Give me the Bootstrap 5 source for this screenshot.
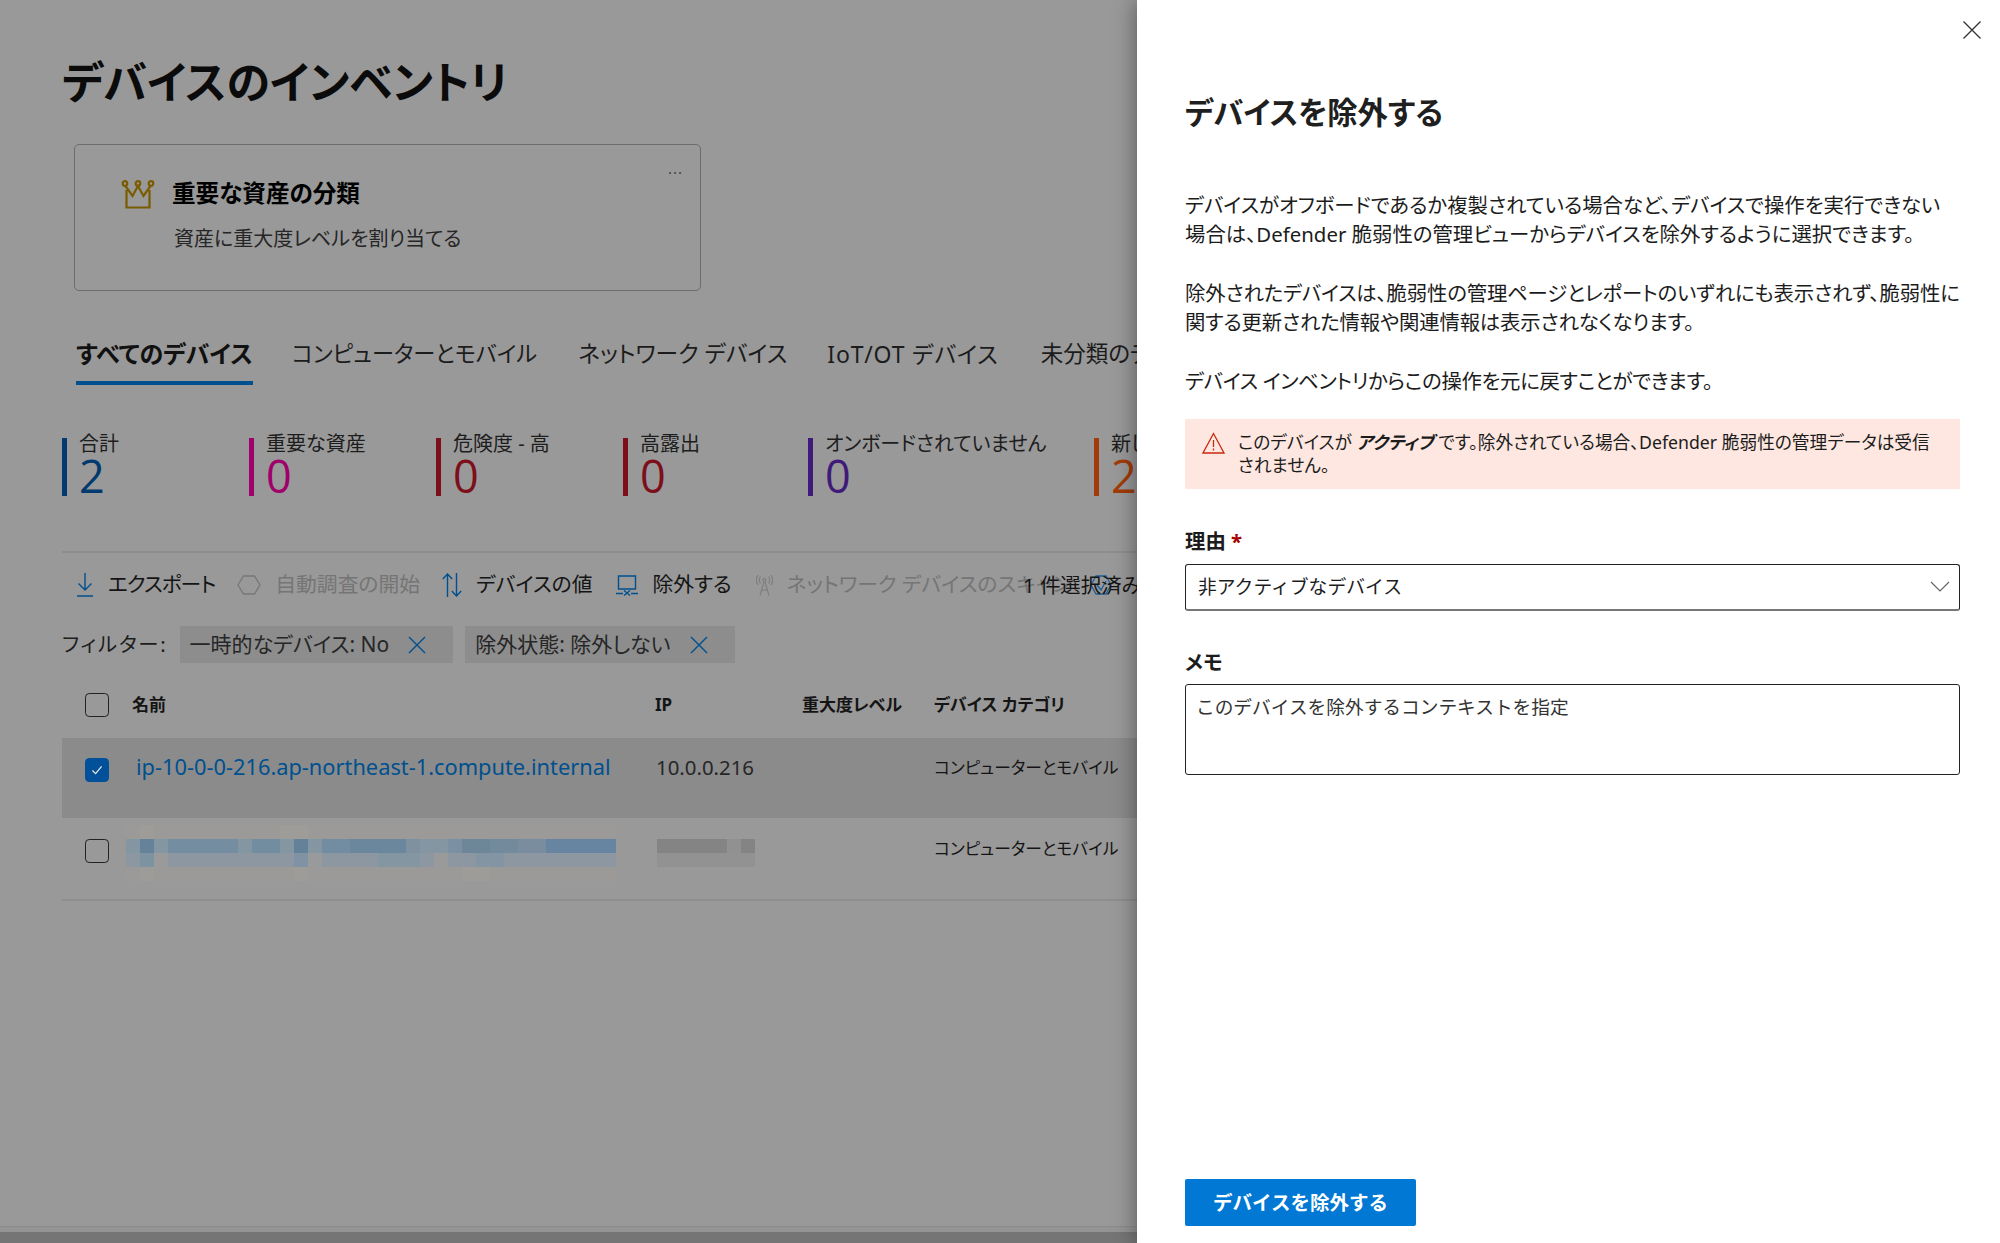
<!DOCTYPE html>
<html lang="ja">
<head>
<meta charset="utf-8">
<title>デバイスのインベントリ</title>
<link href="https://cdn.jsdelivr.net/npm/bootstrap@5.3.0/dist/css/bootstrap.min.css" rel="stylesheet">
<style>
html,body{height:1243px;overflow:hidden}
body{font-family:"Noto Sans","Noto Sans CJK JP",sans-serif;font-feature-settings:"palt";color:#111;background:#999;font-size:20.4px}
.shell{height:1243px}
.dimmed{width:1137px;height:1243px;overflow:hidden;background:#999;padding-left:62px;position:relative;flex:none}
.page-title{font-size:44px;font-weight:700;line-height:48px;margin:58px 0 0;color:#0b0b0b;white-space:nowrap}
.promo{width:627px;height:147px;margin:38px 0 0 12px;background:transparent;border:1.5px solid #6c6c6c;border-radius:5px;padding:31px 0 0 46px;position:relative}
.promo-title{font-size:23.6px;font-weight:700;line-height:32px;color:#000;margin-left:1px}
.promo-sub{font-size:20px;line-height:28px;color:#262626;margin:16px 0 0 53px}
.promo-dots{position:absolute;right:17px;top:16px;font-size:15px;line-height:15px;letter-spacing:1px;color:#444}
.tabbar{margin:46px 0 0 14px;gap:39px;flex-wrap:nowrap;white-space:nowrap}
.tabbar .nav-link{padding:0 0 10px;font-size:22.5px;line-height:34px;color:#1c1c1c;border-bottom:4px solid transparent}
.tabbar .nav-link.active{font-weight:700;font-size:24px;color:#111;border-bottom-color:#004f8f}
.tabbar .tab-b{font-size:22.2px}
.tabbar .tab-c{font-size:22.8px;margin-left:2px}
.tabbar .tab-d{font-size:23px;letter-spacing:.8px;margin:0 3px 0 1px}
.stats{margin-top:53px;white-space:nowrap}
.stat{height:58px;width:187px;flex:none;border-left:5px solid;padding-left:12px}
.stat.short{width:185px}
.stat.wide{width:286px}
.stat-label{font-size:20px;line-height:24px;margin-top:-6px;color:#1d1d1d;display:block}
.stat-num{font-size:45px;line-height:43px;margin-top:-2px;font-weight:500;display:block;font-family:"Open Sans","Noto Sans",sans-serif}
.rule-line{height:2px;background:#8d8d8d;margin-top:55px}
.tools{margin:16px 0 0 14px;height:32px;font-size:20.8px;white-space:nowrap;position:relative;color:#141414}
.tools .off{color:#757575}
.tool{gap:14px;margin-right:24px}
.tool.snug{margin-right:22px}
.tight{letter-spacing:-1px}
.picked{position:absolute;left:947px;top:0;line-height:32px;color:#141414;font-size:20.4px}
.picked-icon{position:absolute;left:1014px;top:6px}
.filters{margin-top:25px;height:37px;font-size:20.4px;white-space:nowrap;color:#1d1d1d}
.fil-name{letter-spacing:1.8px}
.chip{height:37px;background:#8d8d8d;padding:0 27px 0 10px;margin-left:12px;gap:19px;color:#262626;font-size:21px}
.grid-tbl{margin:9px 0 0;width:1075px;table-layout:fixed;--bs-table-bg:transparent;--bs-table-color:#141414;font-size:16.7px}
.grid-tbl th,.grid-tbl td{border:0;padding:0;vertical-align:middle;white-space:nowrap;background:transparent;box-shadow:none}
.grid-tbl th{height:66px;font-weight:700;font-size:17px}
.grid-tbl tr.sel td{height:80px;background:#8b8b8b;vertical-align:top;padding-top:15px;line-height:30px}
.grid-tbl tr.plain td{height:82px;border-bottom:2px solid #8e8e8e;vertical-align:top;padding-top:16px;line-height:30px}
.box{width:24px;height:24px;margin:0 0 0 23px;float:none;background-color:transparent;border:1.5px solid #222;border-radius:3px;display:block}
.box:checked{background-color:#00509a;border-color:#00509a;background-image:url("data:image/svg+xml,%3Csvg xmlns='http://www.w3.org/2000/svg' viewBox='0 0 24 24'%3E%3Cpath d='M7 12.500l3.500 3.500 6.500-8' fill='none' stroke='%23e8e8e8' stroke-width='1.4'/%3E%3C/svg%3E")}
tr.sel .box{margin-top:5px}
tr.plain .box{margin-top:5px}
.host{font-size:21.8px;color:#00508f;margin:-1px 0 0 4px;display:block}
.grid-tbl tr.sel td.ip-val{font-size:20.4px;color:#262626;padding-left:1px;line-height:28px}
.strip{margin:auto 0 0 -62px;height:16px;background:#757575;border-top:5px solid #949494;box-shadow:0 -1px 0 #8a8a8a}
.blur-cells{position:absolute;left:-6px;top:7px;opacity:.85}
.blur-ip{position:absolute;left:2px;top:21px}
.side{width:863px;height:1243px;flex:none;background:#fff;padding:0 40px 17px 48px;box-shadow:0 0 22px rgba(0,0,0,.45);position:relative;color:#1a1a1a}
.x-row{height:39px;padding-top:21px;margin-right:-21px}
.side h2{font-size:30.300px;font-weight:700;line-height:40px;margin:54px 0 0;color:#1f1f1f}
.side p{font-size:20.4px;line-height:29px;margin:0 0 30px;color:#1c1c1c;white-space:nowrap}
.side p.lead-p{margin-top:58px}
.side p.p-two{letter-spacing:-.17px}
.side p.p-three{letter-spacing:-.33px}
.warn{background:#fde7e0;height:70px;border:0;border-radius:0;margin:-7px 0 0;padding:12px 20px 0 17px;gap:13px;font-size:17.7px;line-height:23px;color:#1c1c1c;white-space:nowrap}
.warn b{font-weight:700;font-style:italic}
.fld-label{font-size:20.4px;font-weight:700;line-height:26px;margin:39px 0 10px;display:block;color:#1c1c1c}
.fld-label.memo-label{margin:38px 0 9px}
.req{color:#a80000}
.pick{height:47px;border:1.5px solid #222;border-bottom:2.5px solid #777;border-radius:3px;padding:0 40px 0 12px;font-size:18.8px;color:#1c1c1c;background-size:20px 12px;background-position:right 9px center;background-image:url("data:image/svg+xml,%3Csvg xmlns='http://www.w3.org/2000/svg' viewBox='0 0 20 12'%3E%3Cpath d='M1 1l9 9 9-9' fill='none' stroke='%23666' stroke-width='1.2'/%3E%3C/svg%3E")}
.memo{height:91px;border:1.5px solid #222;border-radius:3px;padding:7px 10px;font-size:18.7px;line-height:29px;resize:none}
.memo::placeholder{color:#333;opacity:1}
.go{width:231px;height:47px;background:#0078d4;border:0;border-radius:2px;color:#fff;font-weight:700;font-size:19.500px;padding:0;margin-top:auto}
</style>
</head>
<body>
<div class="shell d-flex">
  <main class="dimmed d-flex flex-column">
    <h1 class="page-title">デバイスのインベントリ</h1>
    <div class="promo card">
      <div class="d-flex align-items-center gap-3">
        <svg class="mt-1" width="34" height="29" viewBox="0 0 34 29" fill="none" stroke="#7a5c00" stroke-width="2.2"><circle cx="4" cy="3.500" r="2.300"/><circle cx="17" cy="3.500" r="2.300"/><circle cx="30" cy="3.500" r="2.300"/><path d="M4.500 6l7 10 5.500-10 5.500 10 7-10M5.500 10v17.500h23V10"/></svg>
        <div class="promo-title">重要な資産の分類</div>
      </div>
      <div class="promo-sub">資産に重大度レベルを割り当てる</div>
      <span class="promo-dots">...</span>
    </div>
    <ul class="nav tabbar">
      <li class="nav-item"><a class="nav-link active" href="#">すべてのデバイス</a></li>
      <li class="nav-item"><a class="nav-link tab-b" href="#">コンピューターとモバイル</a></li>
      <li class="nav-item"><a class="nav-link tab-c" href="#">ネットワーク デバイス</a></li>
      <li class="nav-item"><a class="nav-link tab-d" href="#">IoT/OT デバイス</a></li>
      <li class="nav-item"><a class="nav-link" href="#">未分類のデバイス</a></li>
    </ul>
    <div class="stats d-flex">
      <div class="stat" style="border-color:#003a6e"><span class="stat-label">合計</span><span class="stat-num" style="color:#003a6e">2</span></div>
      <div class="stat" style="border-color:#a0006b"><span class="stat-label">重要な資産</span><span class="stat-num" style="color:#a0006b">0</span></div>
      <div class="stat" style="border-color:#7c0f1a"><span class="stat-label">危険度 - 高</span><span class="stat-num" style="color:#7c0f1a">0</span></div>
      <div class="stat short" style="border-color:#7c0f1a"><span class="stat-label">高露出</span><span class="stat-num" style="color:#7c0f1a">0</span></div>
      <div class="stat wide" style="border-color:#3f1a78"><span class="stat-label">オンボードされていません</span><span class="stat-num" style="color:#3f1a78">0</span></div>
      <div class="stat" style="border-color:#a13c08"><span class="stat-label">新しいデバイス</span><span class="stat-num" style="color:#a13c08">2</span></div>
    </div>
    <div class="rule-line"></div>
    <div class="tools d-flex align-items-center">
      <div class="tool snug d-flex align-items-center">
        <svg width="18" height="24" viewBox="0 0 18 24" fill="none" stroke="#00508f" stroke-width="1.4"><path d="M9 0v17M2.500 10.500L9 17l6.500-6.500M1 23h16"/></svg><span class="tight">エクスポート</span>
      </div>
      <div class="tool snug d-flex align-items-center off">
        <svg width="24" height="20" viewBox="0 0 24 20" fill="none" stroke="#777" stroke-width="1.3"><path d="M1 10l5.500-9h11l5.500 9-5.500 9h-11z"/></svg><span>自動調査の開始</span>
      </div>
      <div class="tool d-flex align-items-center">
        <svg width="20" height="24" viewBox="0 0 20 24" fill="none" stroke="#00508f" stroke-width="1.4"><path d="M5.500 24V1M.8 6l4.700-5 4.700 5M14.500 0v23M9.800 18l4.700 5 4.700-5"/></svg><span>デバイスの値</span>
      </div>
      <div class="tool d-flex align-items-center">
        <svg width="22" height="21" viewBox="0 0 22 21" fill="none" stroke="#00508f" stroke-width="1.4"><path d="M2.500 1h17v13h-17zM0 18.500h7M15 18.500h7M8 15.500l6 5M14 15.500l-6 5"/></svg><span>除外する</span>
      </div>
      <div class="tool d-flex align-items-center off">
        <svg width="17" height="21" viewBox="0 0 17 21" fill="none" stroke="#7d7d7d" stroke-width="1.1"><circle cx="8.500" cy="5" r="1.500"/><path d="M4.500 1.500a6 6 0 0 0 0 7M12.500 1.500a6 6 0 0 1 0 7M2 0a9 9 0 0 0 0 10M15 0a9 9 0 0 1 0 10M8 7L4 20.500M9 7l4 13.500M5.500 15h6"/></svg><span>ネットワーク デバイスのスキャン</span>
      </div>
      <svg class="picked-icon" width="22" height="20" viewBox="0 0 22 20" fill="none" stroke="#1d5f98" stroke-width="1.3"><path d="M1 10l5-9h10l5 9-5 9H6zM7 10l4 5 5-9"/></svg>
      <span class="picked">1 件選択済み</span>
    </div>
    <div class="filters d-flex align-items-center">
      <span class="fil-name">フィルター:</span>
      <span class="chip d-flex align-items-center">一時的なデバイス: No
        <svg width="18" height="18" viewBox="0 0 18 18" fill="none" stroke="#00508f" stroke-width="1.4"><path d="M1 1l16 16M17 1L1 17"/></svg></span>
      <span class="chip d-flex align-items-center">除外状態: 除外しない
        <svg width="18" height="18" viewBox="0 0 18 18" fill="none" stroke="#00508f" stroke-width="1.4"><path d="M1 1l16 16M17 1L1 17"/></svg></span>
    </div>
    <table class="table grid-tbl">
      <colgroup><col style="width:70px"><col style="width:523px"><col style="width:147px"><col style="width:132px"><col style="width:203px"></colgroup>
      <thead><tr><th><input class="form-check-input box" type="checkbox" aria-label="すべて選択"></th><th>名前</th><th>IP</th><th>重大度レベル</th><th>デバイス カテゴリ</th></tr></thead>
      <tbody>
        <tr class="sel"><td><input class="form-check-input box" type="checkbox" checked aria-label="選択"></td><td><a class="host text-decoration-none" href="#">ip-10-0-0-216.ap-northeast-1.compute.internal</a></td><td class="ip-val">10.0.0.216</td><td></td><td>コンピューターとモバイル</td></tr>
        <tr class="plain"><td><input class="form-check-input box" type="checkbox" aria-label="選択"></td>
          <td class="position-relative"><svg class="d-block blur-cells" width="490" height="56" viewBox="0 0 35 4" shape-rendering="crispEdges" preserveAspectRatio="none"><rect width="35" height="1" fill="#9c9b9a"/><rect y="3" width="35" height="1" fill="#9c9b9a"/><g fill="#a09d9a"><rect x="1" width="1" height="1"/><rect x="11" width="2" height="1"/><rect x="1" y="3" width="1" height="1"/><rect x="12" y="3" width="1" height="1"/><rect x="24" y="3" width="2" height="1"/></g><rect y="1" width="35" height="1" fill="#8296a5"/><rect x="1" y="1" width="1" height="1" fill="#5d7f9c"/><rect x="3" y="1" width="5" height="1" fill="#6f8ba3"/><rect x="9" y="1" width="2" height="1" fill="#6c8aa2"/><rect x="12" y="1" width="1" height="1" fill="#5a7d99"/><rect x="14" y="1" width="2" height="1" fill="#6c8ba4"/><rect x="16" y="1" width="4" height="1" fill="#64849f"/><rect x="20" y="1" width="1" height="1" fill="#7b90a0"/><rect x="23" y="1" width="1" height="1" fill="#7690a5"/><rect x="24" y="1" width="2" height="1" fill="#668499"/><rect x="26" y="1" width="2" height="1" fill="#6c889c"/><rect x="28" y="1" width="2" height="1" fill="#748c9f"/><rect x="30" y="1" width="5" height="1" fill="#5f82a3"/><rect y="2" width="35" height="1" fill="#8b97a3"/><rect x="1" y="2" width="1" height="1" fill="#7a92a4"/><rect x="2" y="2" width="1" height="1" fill="#9b9b9b"/><rect x="12" y="2" width="1" height="1" fill="#7b93a6"/><rect x="13" y="2" width="1" height="1" fill="#9a9b9c"/><rect x="18" y="2" width="3" height="1" fill="#8296a5"/><rect x="22" y="2" width="1" height="1" fill="#9b9b9b"/><rect x="25" y="2" width="2" height="1" fill="#8095a5"/></svg></td>
          <td class="position-relative"><svg class="d-block blur-ip" width="98" height="28" viewBox="0 0 7 2" shape-rendering="crispEdges" preserveAspectRatio="none"><rect width="7" height="1" fill="#848484"/><rect x="5" width="1" height="1" fill="#919191"/><rect y="1" width="7" height="1" fill="#929292"/></svg></td><td></td><td>コンピューターとモバイル</td></tr>
      </tbody>
    </table>
    <div class="strip"></div>
  </main>
  <aside class="side d-flex flex-column">
    <div class="x-row d-flex justify-content-end">
      <svg width="18" height="18" viewBox="0 0 18 18" fill="none" stroke="#333" stroke-width="1.3"><path d="M.500.500l17 17M17.500.500l-17 17"/></svg>
    </div>
    <h2>デバイスを除外する</h2>
    <p class="lead-p">デバイスがオフボードであるか複製されている場合など、デバイスで操作を実行できない<br>場合は、Defender 脆弱性の管理ビューからデバイスを除外するように選択できます。</p>
    <p class="p-two">除外されたデバイスは、脆弱性の管理ページとレポートのいずれにも表示されず、脆弱性に<br>関する更新された情報や関連情報は表示されなくなります。</p>
    <p class="p-three">デバイス インベントリからこの操作を元に戻すことができます。</p>
    <div class="warn alert d-flex" role="alert">
      <svg width="23" height="22" viewBox="0 0 23 22" fill="none" stroke="#c62a10" stroke-width="1.3" style="margin-top:1px;flex:none"><path d="M11.500 1.500L1 21h21zM11.500 8v7M11.500 16.500v2"/></svg>
      <div>このデバイスが <b>アクティブ</b> です。除外されている場合、Defender 脆弱性の管理データは受信<br>されません。</div>
    </div>
    <label class="fld-label">理由 <span class="req">*</span></label>
    <select class="form-select pick" aria-label="理由"><option>非アクティブなデバイス</option></select>
    <label class="fld-label memo-label">メモ</label>
    <textarea class="form-control memo" placeholder="このデバイスを除外するコンテキストを指定"></textarea>
    <button class="btn go" type="button">デバイスを除外する</button>
  </aside>
</div>
<script src="https://cdn.jsdelivr.net/npm/bootstrap@5.3.0/dist/js/bootstrap.bundle.min.js"></script>
</body>
</html>
